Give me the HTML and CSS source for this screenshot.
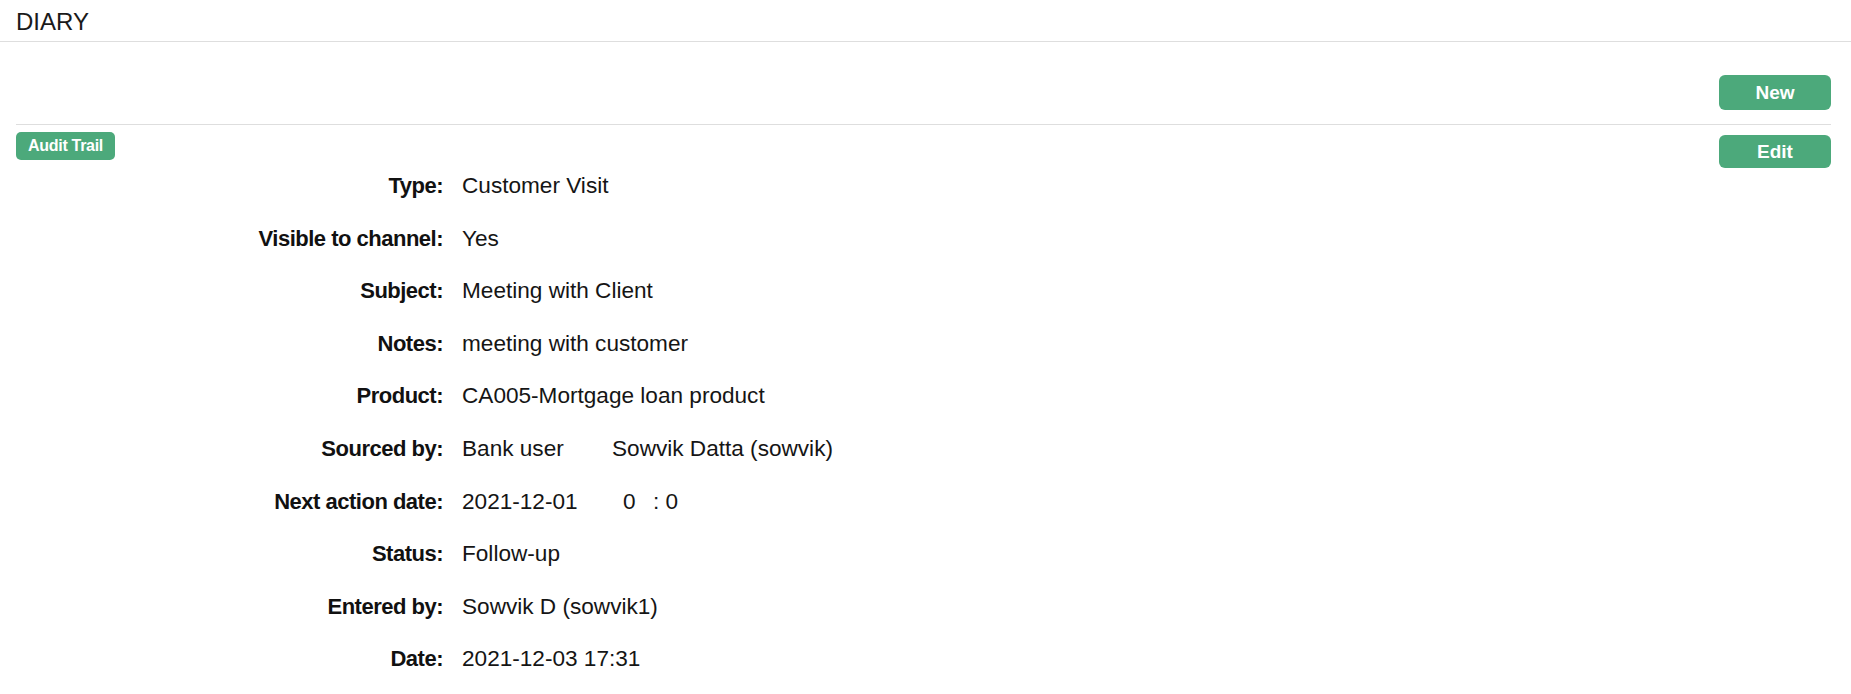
FILE: index.html
```html
<!DOCTYPE html>
<html>
<head>
<meta charset="utf-8">
<link rel="stylesheet" href="styles.css">
</head>
<body>
<header class="page-head">DIARY</header>
<main class="content">
  <div class="toolbar">
    <button class="btn btn-lg">New</button>
  </div>
  <div class="actions">
    <button class="btn btn-sm">Audit Trail</button>
    <button class="btn btn-lg btn-edit">Edit</button>
  </div>
  <dl class="details">
    <div class="row"><dt>Type:</dt><dd>Customer Visit</dd></div>
    <div class="row"><dt>Visible to channel:</dt><dd>Yes</dd></div>
    <div class="row"><dt>Subject:</dt><dd>Meeting with Client</dd></div>
    <div class="row"><dt>Notes:</dt><dd>meeting with customer</dd></div>
    <div class="row"><dt>Product:</dt><dd>CA005-Mortgage loan product</dd></div>
    <div class="row"><dt>Sourced by:</dt><dd><span class="src">Bank user</span>Sowvik Datta (sowvik)</dd></div>
    <div class="row"><dt>Next action date:</dt><dd><span class="date">2021-12-01</span><span class="hh">0</span>: 0</dd></div>
    <div class="row"><dt>Status:</dt><dd>Follow-up</dd></div>
    <div class="row"><dt>Entered by:</dt><dd>Sowvik D (sowvik1)</dd></div>
    <div class="row"><dt>Date:</dt><dd>2021-12-03 17:31</dd></div>
  </dl>
</main>
</body>
</html>
```
FILE: styles.css
```css
html, body {
  margin: 0;
  padding: 0;
  background: #fff;
  font-family: "Liberation Sans", Arial, sans-serif;
  color: #111;
}

.page-head {
  font-size: 24px;
  line-height: 39px;
  padding: 2px 16px 0 16px;
  height: 42px;
  box-sizing: border-box;
  border-bottom: 1px solid #dedede;
  color: #1a1a1a;
}

.content {
  padding: 0 20px 0 16px;
}

.toolbar {
  display: flex;
  justify-content: flex-end;
  padding-top: 33px;
  padding-bottom: 14px;
  border-bottom: 1px solid #dedede;
}

.btn {
  font-family: "Liberation Sans", Arial, sans-serif;
  font-weight: bold;
  color: #fff;
  background: #4ca97b;
  border: none;
  border-radius: 6px;
  padding: 0;
  cursor: pointer;
}

.btn-lg {
  width: 112px;
  height: 35px;
  font-size: 19px;
}

.btn-sm {
  width: 99px;
  height: 28px;
  font-size: 16px;
  letter-spacing: -0.3px;
  border-radius: 5px;
}

.actions {
  display: flex;
  justify-content: space-between;
  align-items: flex-start;
  height: 28px;
  margin-top: 7px;
}

.btn-edit {
  margin-top: 3px;
  height: 33px;
}

.details {
  margin: 0;
}

.row {
  display: grid;
  grid-template-columns: 427px 1fr;
  column-gap: 19px;
  padding: 10px 0;
  line-height: 32.6px;
  font-size: 22px;
}

.row dt {
  text-align: right;
  font-weight: bold;
  letter-spacing: -0.5px;
  color: #111;
}

.row dd {
  margin: 0;
  font-size: 22.6px;
  color: #151515;
}

.src {
  display: inline-block;
  width: 150px;
}

.date {
  display: inline-block;
  width: 161px;
}

.hh {
  display: inline-block;
  width: 30px;
}
```
